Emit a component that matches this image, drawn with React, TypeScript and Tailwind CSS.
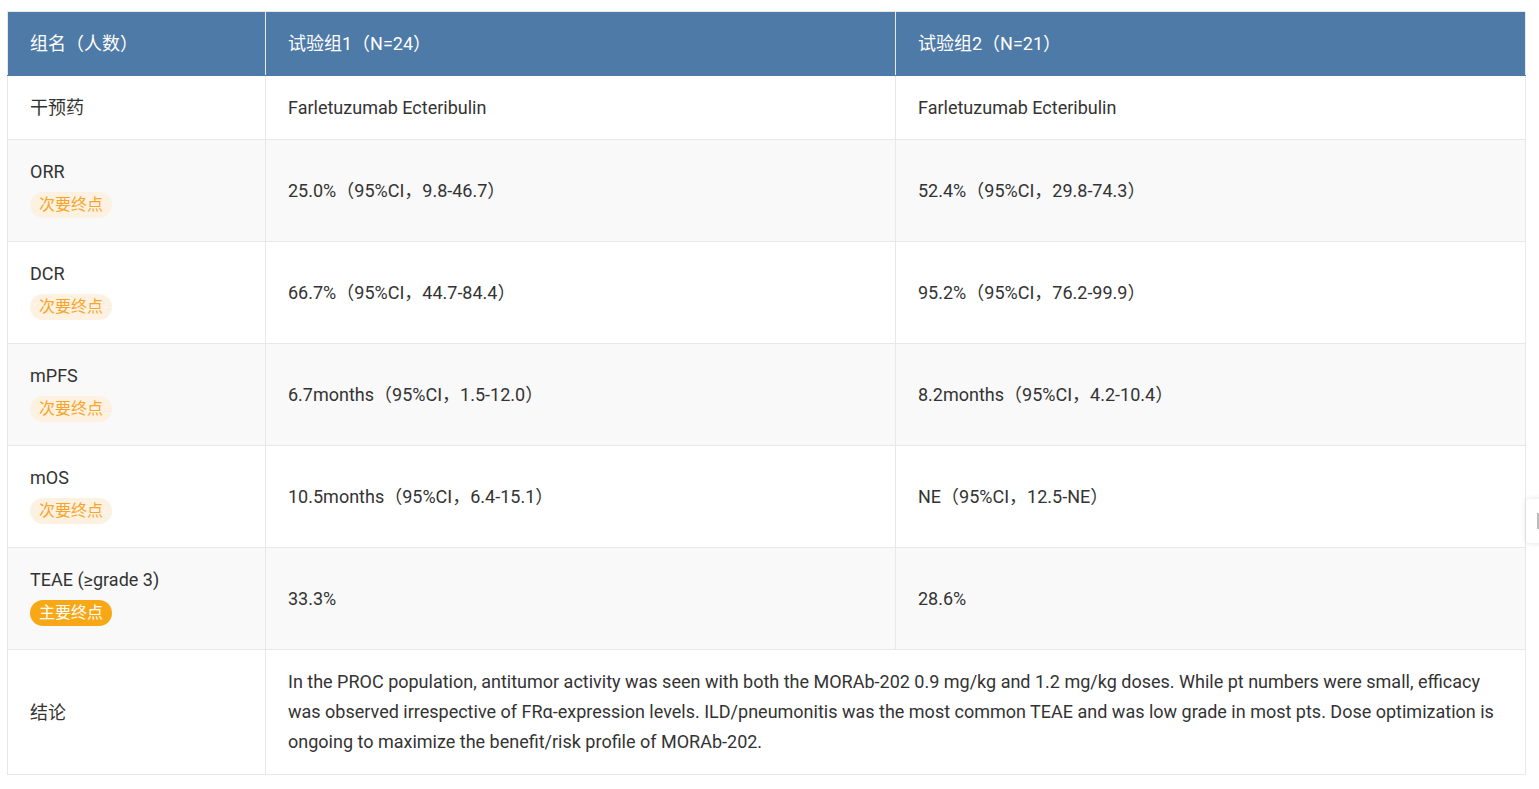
import React from "react";

const rows = [
  {
    name: "ORR",
    badge: "secondary",
    a: "25.0%（95%CI，9.8-46.7）",
    b: "52.4%（95%CI，29.8-74.3）",
  },
  {
    name: "DCR",
    badge: "secondary",
    a: "66.7%（95%CI，44.7-84.4）",
    b: "95.2%（95%CI，76.2-99.9）",
  },
  {
    name: "mPFS",
    badge: "secondary",
    a: "6.7months（95%CI，1.5-12.0）",
    b: "8.2months（95%CI，4.2-10.4）",
  },
  {
    name: "mOS",
    badge: "secondary",
    a: "10.5months（95%CI，6.4-15.1）",
    b: "NE（95%CI，12.5-NE）",
  },
  {
    name: "TEAE (≥grade 3)",
    badge: "primary",
    a: "33.3%",
    b: "28.6%",
  },
];

function Badge({ kind }: { kind: string }) {
  if (kind === "primary") {
    return (
      <span className="inline-block h-[26px] rounded-full bg-[#f8a816] px-[9px] text-[16px] leading-[26px] text-white">
        主要终点
      </span>
    );
  }
  return (
    <span className="inline-block h-[26px] rounded-full bg-[#fdf2e2] px-[9px] text-[16px] leading-[26px] text-[#f7a52a]">
      次要终点
    </span>
  );
}

export default function App() {
  const cell = "border border-[#e8e8e8] px-[22px] align-middle";

  return (
    <div
      className="relative min-h-[789px] bg-white pt-[11px] pl-[7px] text-[18px] text-[#333]"
      style={{ fontFamily: 'Roboto, "Noto Sans CJK SC", sans-serif' }}
    >
      <table className="w-[1518px] table-fixed border-collapse">
        <colgroup>
          <col className="w-[258px]" />
          <col className="w-[630px]" />
          <col className="w-[630px]" />
        </colgroup>
        <thead>
          <tr className="h-[64px] bg-[#4e7aa7] text-white">
            <th className="border border-[#e8e8e8] border-b-[#4e7aa7] px-[22px] text-left font-normal">
              组名（人数）
            </th>
            <th className="border border-[#e8e8e8] border-b-[#4e7aa7] px-[22px] text-left font-normal">
              试验组1（N=24）
            </th>
            <th className="border border-[#e8e8e8] border-b-[#4e7aa7] px-[22px] text-left font-normal">
              试验组2（N=21）
            </th>
          </tr>
        </thead>
        <tbody>
          <tr className="h-[64px] bg-white">
            <td className={cell}>干预药</td>
            <td className={cell}>Farletuzumab Ecteribulin</td>
            <td className={cell}>Farletuzumab Ecteribulin</td>
          </tr>
          {rows.map((r, i) => (
            <tr
              key={r.name}
              className={`h-[102px] ${i % 2 === 0 ? "bg-[#f9f9f9]" : "bg-white"}`}
            >
              <td className={`${cell} pb-[4px]`}>
                <div className="leading-[24px]">{r.name}</div>
                <div className="mt-[8px] flex">
                  <Badge kind={r.badge} />
                </div>
              </td>
              <td className={cell}>{r.a}</td>
              <td className={cell}>{r.b}</td>
            </tr>
          ))}
          <tr className="h-[125px] bg-white">
            <td className={cell}>结论</td>
            <td className={`${cell} leading-[30px]`} colSpan={2}>
              In the PROC population, antitumor activity was seen with both the
              MORAb-202 0.9 mg/kg and 1.2 mg/kg doses. While pt numbers were
              small, efficacy was observed irrespective of FRα-expression
              levels. ILD/pneumonitis was the most common TEAE and was low grade
              in most pts. Dose optimization is ongoing to maximize the
              benefit/risk profile of MORAb-202.
            </td>
          </tr>
        </tbody>
      </table>

      <div className="absolute left-[1526px] top-[499px] flex h-[44px] w-[20px] items-center rounded-l-[4px] bg-white pl-[11px] shadow-[0_0_6px_rgba(0,0,0,0.12)]">
        <div className="h-[16px] w-[2px] bg-[#bbb]" />
      </div>
    </div>
  );
}
